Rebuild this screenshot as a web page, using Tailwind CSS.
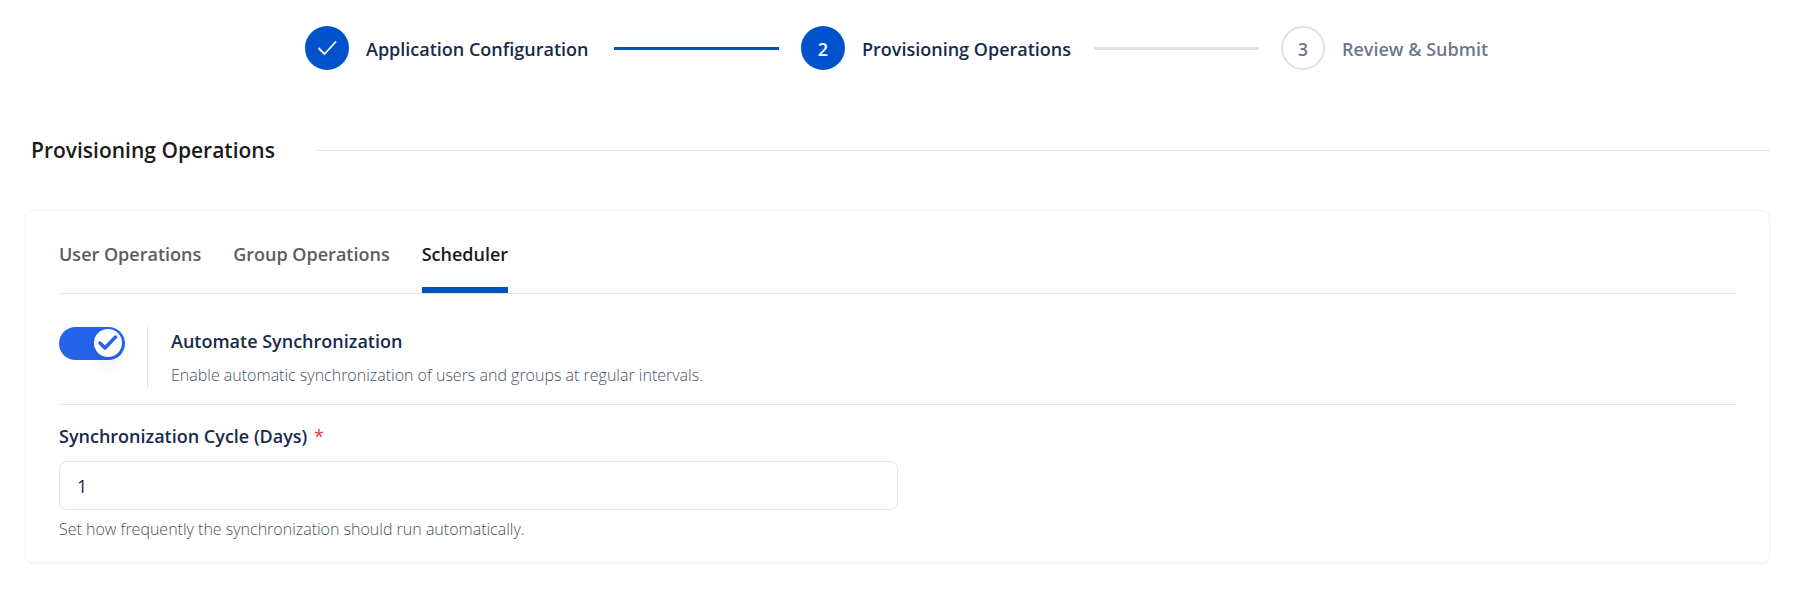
<!DOCTYPE html>
<html lang="en">
<head>
<meta charset="utf-8">
<meta name="viewport" content="width=device-width, initial-scale=1">
<title>Provisioning Operations</title>
<script src="https://cdn.jsdelivr.net/npm/@tailwindcss/browser@4"></script>
</head>
<body class="bg-white font-['Open_Sans','Noto_Sans',sans-serif] text-[#172b4d]">
<div class="pt-[26px] pr-[30px] pb-9 pl-[25px]">
  <ol class="flex items-center justify-center gap-[22px] text-[18px] leading-6 font-semibold whitespace-nowrap">
    <li class="flex items-center gap-[17px]">
      <span class="flex size-11 items-center justify-center rounded-full bg-[#0052cc]">
        <svg class="size-6" viewBox="0 0 24 24" fill="none" stroke="#fff" stroke-width="1.8" aria-hidden="true"><path d="M3.5 12l6 6L21 5.5"/></svg>
      </span>
      <span class="min-w-[226px] pt-[2px]">Application Configuration</span>
    </li>
    <li class="h-[3px] w-[165px] bg-[#0052b8]" aria-hidden="true"></li>
    <li class="flex items-center gap-[17px]" aria-current="step">
      <span class="flex size-11 items-center justify-center rounded-full bg-[#0052cc] pt-[2px] text-white">2</span>
      <span class="min-w-[210px] pt-[2px]">Provisioning Operations</span>
    </li>
    <li class="h-[3px] w-[165px] bg-[#dfe1e3]" aria-hidden="true"></li>
    <li class="flex items-center gap-[17px] text-[#6b778c]">
      <span class="flex size-11 items-center justify-center rounded-full border-2 border-[#e0e2e3] pt-[2px]">3</span>
      <span class="min-w-[148px] pt-[2px]">Review &amp; Submit</span>
    </li>
  </ol>

  <div class="mt-16 flex items-center gap-[42px] pl-[6px]">
    <h1 class="text-[21px] leading-8 font-semibold text-[#1a1a1a]">Provisioning Operations</h1>
    <div class="h-px grow bg-[#e5e6e8]"></div>
  </div>

  <section class="mt-11 rounded-lg border border-[#f3f3f4] bg-white px-[33px] pb-[21px] shadow-xs">
    <div role="tablist" class="flex gap-8 border-b border-[#e3e4e7] text-[18px] leading-6 font-semibold text-[#5c5c5e]">
      <button type="button" role="tab" aria-selected="false" class="border-b-[6px] border-transparent pt-[31px] pb-[21px]">User Operations</button>
      <button type="button" role="tab" aria-selected="false" class="border-b-[6px] border-transparent pt-[31px] pb-[21px]">Group Operations</button>
      <button type="button" role="tab" aria-selected="true" class="border-b-[6px] border-[#0052b8] pt-[31px] pb-[21px] text-[#1a1a1a]">Scheduler</button>
    </div>

    <div class="flex items-start border-b border-[#e3e4e7] pt-[33px] pb-[17px]">
      <label class="relative block h-[33px] w-[66px] cursor-pointer">
        <input id="automate" type="checkbox" checked aria-label="Automate Synchronization" class="peer size-full cursor-pointer appearance-none rounded-full bg-gray-300 checked:bg-[#2563eb]">
        <span class="pointer-events-none absolute top-[2px] right-[3px] flex size-[28px] items-center justify-center rounded-full bg-white shadow-[0_10px_16px_rgba(40,20,80,0.06)]">
          <svg class="size-5" viewBox="0 0 20 20" fill="none" stroke="#2563eb" stroke-width="3.4" stroke-linecap="round" stroke-linejoin="round" aria-hidden="true"><path d="M2 10l5 5L17.5 4"/></svg>
        </span>
      </label>
      <div class="ml-[22px] border-l border-[#dfe1e3] pl-[23px]">
        <label for="automate" class="block pt-[2px] text-[18px] leading-6 font-semibold">Automate Synchronization</label>
        <p class="pt-[10px] text-[16px] leading-6 font-light text-[#465260]">Enable automatic synchronization of users and groups at regular intervals.</p>
      </div>
    </div>

    <label for="cycle" class="mt-[19px] block text-[18px] leading-6 font-semibold">Synchronization Cycle (Days) <span class="ml-[2px] font-normal text-[#e53e4a]">*</span></label>
    <input id="cycle" type="text" inputmode="numeric" value="1" required aria-describedby="cycle-help" class="mt-[13px] block h-[49px] w-1/2 rounded-lg border border-[#e2e4e7] bg-white px-[17px] text-[18px] leading-6">
    <p id="cycle-help" class="mt-[7px] text-[16px] leading-6 font-light text-[#465260]">Set how frequently the synchronization should run automatically.</p>
  </section>
</div>
</body>
</html>
